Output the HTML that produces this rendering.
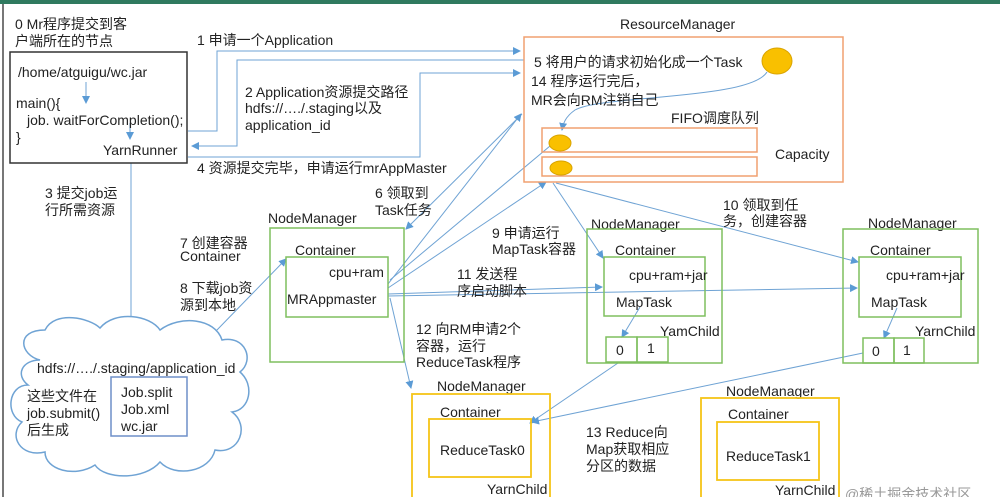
<!DOCTYPE html>
<html><head><meta charset="utf-8"><style>
html,body{margin:0;padding:0;background:#fff}
svg{display:block}
text{font-family:"Liberation Sans","Noto Sans CJK SC",sans-serif;font-size:14px;fill:#222}
</style></head><body>
<svg width="1000" height="497" viewBox="0 0 1000 497" xmlns="http://www.w3.org/2000/svg">
<defs>
<marker id="a" markerWidth="8" markerHeight="8" refX="7" refY="4" orient="auto" markerUnits="userSpaceOnUse">
<path d="M0,0 L8,4 L0,8 z" fill="#5b9bd5"/></marker>
</defs>
<rect x="0" y="0" width="1000" height="4" fill="#2f7a5f"/>
<rect x="2" y="4" width="2" height="493" fill="#777"/>

<g fill="none" stroke="#6fa3d4" stroke-width="1">
<polyline points="188,131 217,131 217,51 520,51" marker-end="url(#a)"/>
<polyline points="524,60 237,60 237,146 192,146" marker-end="url(#a)"/>
<polyline points="188,157 420,157 420,73 520,73" marker-end="url(#a)"/>
<line x1="86" y1="82" x2="86" y2="103" marker-end="url(#a)"/>
<line x1="130" y1="123" x2="130" y2="139" marker-end="url(#a)"/>
<line x1="131" y1="163" x2="131" y2="326" marker-end="url(#a)"/>
<line x1="522" y1="114" x2="406" y2="229" marker-end="url(#a)"/>
<line x1="388" y1="284" x2="521" y2="114" marker-end="url(#a)"/>
<line x1="388" y1="288" x2="546" y2="182" marker-end="url(#a)"/>
<line x1="390" y1="280" x2="550" y2="146"/>
<line x1="553" y1="183" x2="603" y2="258" marker-end="url(#a)"/>
<line x1="556" y1="183" x2="858" y2="262" marker-end="url(#a)"/>
<line x1="388" y1="294" x2="602" y2="287" marker-end="url(#a)"/>
<line x1="388" y1="296" x2="857" y2="288" marker-end="url(#a)"/>
<line x1="390" y1="298" x2="411" y2="388" marker-end="url(#a)"/>
<line x1="640" y1="307" x2="622" y2="337" marker-end="url(#a)"/>
<line x1="897" y1="308" x2="884" y2="338" marker-end="url(#a)"/>
<line x1="618" y1="363" x2="530" y2="423" marker-end="url(#a)"/>
<line x1="863" y1="353" x2="532" y2="422" marker-end="url(#a)"/>
<line x1="216" y1="331" x2="286" y2="259" marker-end="url(#a)"/>
<path d="M767,72 C750,100 600,95 575,110 C565,117 563,124 562,130" marker-end="url(#a)"/>
</g>

<text x="15" y="29">0 Mr程序提交到客</text>
<text x="15" y="46">户端所在的节点</text>
<rect x="10" y="52" width="177" height="111" fill="none" stroke="#333" stroke-width="1.5"/>
<text x="18" y="77">/home/atguigu/wc.jar</text>
<text x="16" y="108">main(){</text>
<text x="27" y="125">job. waitForCompletion();</text>
<text x="16" y="142">}</text>
<text x="103" y="155">YarnRunner</text>

<text x="197" y="45">1 申请一个Application</text>
<text x="245" y="97">2 Application资源提交路径</text>
<text x="245" y="113">hdfs://…./.staging以及</text>
<text x="245" y="130">application_id</text>
<text x="197" y="173">4 资源提交完毕，申请运行mrAppMaster</text>
<text x="45" y="198">3 提交job运</text>
<text x="45" y="215">行所需资源</text>

<text x="620" y="29">ResourceManager</text>
<rect x="524" y="37" width="319" height="145" fill="none" stroke="#f0a070" stroke-width="1.5"/>
<text x="534" y="67">5 将用户的请求初始化成一个Task</text>
<ellipse cx="777" cy="61" rx="15" ry="13" fill="#f9c000" stroke="#d9a300"/>
<text x="531" y="86">14 程序运行完后，</text>
<text x="531" y="105">MR会向RM注销自己</text>
<text x="671" y="123">FIFO调度队列</text>
<rect x="542" y="128" width="215" height="24" fill="none" stroke="#f0a070" stroke-width="1.5"/>
<rect x="542" y="157" width="215" height="19" fill="none" stroke="#f0a070" stroke-width="1.5"/>
<ellipse cx="560" cy="143" rx="11" ry="8" fill="#f9c000" stroke="#d9a300"/>
<ellipse cx="561" cy="168" rx="11" ry="7" fill="#f9c000" stroke="#d9a300"/>
<text x="775" y="159">Capacity</text>

<text x="375" y="198">6 领取到</text>
<text x="375" y="215">Task任务</text>
<text x="268" y="223">NodeManager</text>
<rect x="270" y="228" width="134" height="134" fill="none" stroke="#7fbf5f" stroke-width="1.5"/>
<text x="295" y="255">Container</text>
<rect x="286" y="257" width="102" height="60" fill="none" stroke="#7fbf5f" stroke-width="1.5"/>
<text x="329" y="277">cpu+ram</text>
<text x="287" y="304">MRAppmaster</text>
<text x="180" y="248">7 创建容器</text>
<text x="180" y="261">Container</text>
<text x="180" y="293">8 下载job资</text>
<text x="180" y="310">源到本地</text>

<path d="M40,360 C20,355 15,330 45,330 C55,310 90,318 100,328 C115,310 150,315 160,330 C180,315 215,318 222,340 C245,335 255,360 240,372 C255,385 250,410 232,412 C250,425 240,455 215,450 C210,472 175,478 160,462 C145,480 105,480 95,465 C75,478 45,470 45,452 C20,458 8,435 22,422 C5,415 8,385 28,385 C15,375 22,360 40,360 z" fill="#fff" stroke="#6fa3d4" stroke-width="1.5"/>
<text x="37" y="373">hdfs://…./.staging/application_id</text>
<rect x="111" y="377" width="76" height="59" fill="none" stroke="#6e8fc8" stroke-width="1.5"/>
<text x="121" y="397">Job.split</text>
<text x="121" y="414">Job.xml</text>
<text x="121" y="431">wc.jar</text>
<text x="27" y="401">这些文件在</text>
<text x="27" y="418">job.submit()</text>
<text x="27" y="435">后生成</text>

<text x="492" y="238">9 申请运行</text>
<text x="492" y="254">MapTask容器</text>
<text x="723" y="210">10 领取到任</text>
<text x="723" y="226">务，创建容器</text>

<text x="591" y="229">NodeManager</text>
<rect x="587" y="229" width="135" height="134" fill="none" stroke="#7fbf5f" stroke-width="1.5"/>
<text x="615" y="255">Container</text>
<rect x="604" y="257" width="101" height="59" fill="none" stroke="#7fbf5f" stroke-width="1.5"/>
<text x="629" y="280">cpu+ram+jar</text>
<text x="616" y="307">MapTask</text>
<text x="660" y="336">YamChild</text>
<rect x="606" y="337" width="31" height="25" fill="none" stroke="#7fbf5f" stroke-width="1.5"/>
<rect x="637" y="337" width="31" height="25" fill="none" stroke="#7fbf5f" stroke-width="1.5"/>
<text x="616" y="355">0</text><text x="647" y="353">1</text>

<text x="868" y="228">NodeManager</text>
<rect x="843" y="229" width="135" height="134" fill="none" stroke="#7fbf5f" stroke-width="1.5"/>
<text x="870" y="255">Container</text>
<rect x="859" y="257" width="102" height="60" fill="none" stroke="#7fbf5f" stroke-width="1.5"/>
<text x="886" y="280">cpu+ram+jar</text>
<text x="871" y="307">MapTask</text>
<text x="915" y="336">YarnChild</text>
<rect x="863" y="338" width="31" height="25" fill="none" stroke="#7fbf5f" stroke-width="1.5"/>
<rect x="894" y="338" width="30" height="25" fill="none" stroke="#7fbf5f" stroke-width="1.5"/>
<text x="872" y="356">0</text><text x="903" y="355">1</text>

<text x="457" y="279">11 发送程</text>
<text x="457" y="296">序启动脚本</text>
<text x="416" y="334">12 向RM申请2个</text>
<text x="416" y="351">容器，运行</text>
<text x="416" y="367">ReduceTask程序</text>

<text x="437" y="391">NodeManager</text>
<rect x="412" y="394" width="138" height="110" fill="none" stroke="#f5c518" stroke-width="1.8"/>
<text x="440" y="417">Container</text>
<rect x="429" y="419" width="102" height="58" fill="none" stroke="#f5c518" stroke-width="1.8"/>
<text x="440" y="455">ReduceTask0</text>
<text x="487" y="494">YarnChild</text>

<text x="586" y="437">13 Reduce向</text>
<text x="586" y="454">Map获取相应</text>
<text x="586" y="471">分区的数据</text>

<text x="726" y="396">NodeManager</text>
<rect x="701" y="398" width="138" height="106" fill="none" stroke="#f5c518" stroke-width="1.8"/>
<text x="728" y="419">Container</text>
<rect x="717" y="422" width="102" height="58" fill="none" stroke="#f5c518" stroke-width="1.8"/>
<text x="726" y="461">ReduceTask1</text>
<text x="775" y="495">YarnChild</text>
<text x="845" y="499" style="fill:#999">@稀土掘金技术社区</text>
</svg>
</body></html>
